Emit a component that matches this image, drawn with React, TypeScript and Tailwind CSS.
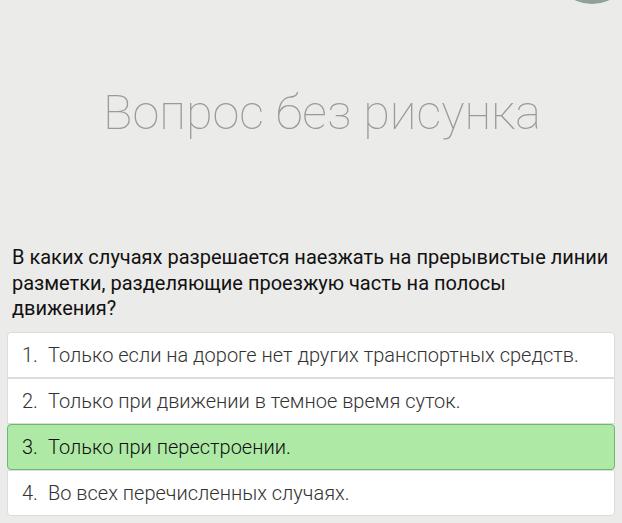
export default function App() {
  const opts = [
    "Только если на дороге нет других транспортных средств.",
    "Только при движении в темное время суток.",
    "Только при перестроении.",
    "Во всех перечисленных случаях.",
  ];
  const q = [
    "В каких случаях разрешается наезжать на прерывистые линии",
    "разметки, разделяющие проезжую часть на полосы",
    "движения?",
  ];
  return (
    <div
      className="relative w-[622px] h-[523px] overflow-hidden bg-[#ebebe9]"
      style={{ fontFamily: "Roboto, 'Liberation Sans', sans-serif" }}
    >
      <div className="absolute left-[552px] top-[-76px] w-[80px] h-[80px] rounded-full bg-[#8fa094]" />
      <div className="h-[236px] flex items-center justify-center pb-[10px] pl-[22px]">
        <div className="text-[48.7px] font-thin text-[#9a9a9a] leading-none">Вопрос без рисунка</div>
      </div>
      <div className="mt-[9px] pl-[12px] text-[20px] leading-[25.5px] font-normal text-[#111]">
        {q.map((l, i) => (
          <div key={i} className="whitespace-nowrap">
            {l}
          </div>
        ))}
      </div>
      <div className="mx-[7px] mt-[10px] flex flex-col">
        {opts.map((o, i) => {
          const ok = i === 2;
          return (
            <div
              key={i}
              className={
                ok
                  ? "h-[46px] flex items-center pl-[14px] bg-[#aeeaa6] border border-[#6cb772] rounded-[4px] text-[20px] font-light text-[#111]"
                  : "h-[46px] flex items-center pl-[14px] bg-white border border-[#dcdcdc] text-[20px] font-light text-[#333] " +
                    (i === 0 ? "rounded-t-[4px] " : "") +
                    (i === 3 ? "rounded-b-[4px] " : "")
              }
            >
              <span className="w-[26px] shrink-0">{i + 1}.</span>
              <span>{o}</span>
            </div>
          );
        })}
      </div>
    </div>
  );
}
